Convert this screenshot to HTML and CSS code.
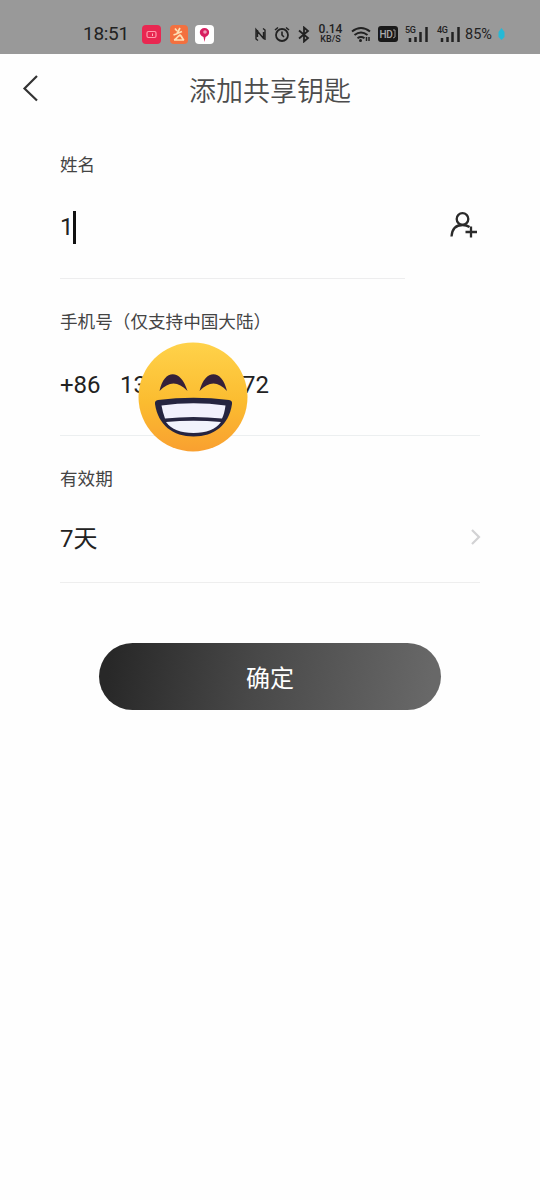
FILE: index.html
```html
<!DOCTYPE html>
<html lang="zh-CN">
<head>
<meta charset="utf-8">
<title>添加共享钥匙</title>
<link rel="stylesheet" href="styles.css">
</head>
<body>
<header class="status">
  <span class="time">18:51</span>
  <div class="apps">
    <svg width="19" height="19" viewBox="0 0 19 19"><rect width="19" height="19" rx="4" fill="#e92751"/><rect x="5" y="6.500" width="9" height="6" rx="1.500" fill="none" stroke="#ff9aac" stroke-width="1.200"/><path d="M10.500 8.500v2.500" stroke="#ffb4c0"/></svg>
    <svg class="taobao" width="18" height="19" viewBox="0 0 18 19"><rect width="18" height="19" rx="4" fill="#f3703f"/><path d="M5 3.500l2 2.500M10 3L7 8.500l5-2M3.500 10l4-1.500M4 15c3-1 3.500-4 6-5 2 1 2 4 4 5H4" fill="none" stroke="#ffe0b5" stroke-width="1.700"/></svg>
    <svg width="19" height="19" viewBox="0 0 19 19"><rect width="19" height="19" rx="4" fill="#fff"/><path d="M9.500 17l-1-5C3 10 4 3 9.500 3s6.500 7 1 9z" fill="#d81f60"/><circle cx="10" cy="7" r="1.800" fill="#ef9ab5"/></svg>
  </div>
  <div class="signals">
    <svg width="13" height="17" viewBox="0 0 13 17"><path d="M4 14.500L2 13V3.500L10 13M3.500 4v7M9 2.500L11 4v10M9.500 6v6" fill="none" stroke="#222" stroke-width="1.400"/></svg>
    <svg class="alarm" width="16" height="17" viewBox="0 0 16 17"><circle cx="8" cy="9" r="6" fill="none" stroke="#222" stroke-width="1.800"/><path d="M8 5.500V9l2 2M1 4l3-2.500M15 4l-3-2.500" fill="none" stroke="#222" stroke-width="1.600"/></svg>
    <svg class="bt" width="12" height="17" viewBox="0 0 12 17"><path d="M1 4.500l9 7.500-4 3.500V1.500l4 3.500-9 7.500" fill="none" stroke="#222" stroke-width="1.800"/></svg>
    <div class="speed"><span class="rate">0.14</span><span class="unit">KB/S</span></div>
    <svg class="wifi" width="20" height="17" viewBox="0 0 20 17"><path d="M1 5.500q9-7 18 0M3.500 9q6.500-5 13 0M6.500 12.200q3.500-2.500 7 0" fill="none" stroke="#222" stroke-width="2"/><circle cx="9.500" cy="14.500" r="1.500" fill="#222"/><path d="M15.500 11v4M18 11v4" stroke="#222" stroke-width="1.500"/></svg>
    <span class="hd">HD<svg width="4" height="10" viewBox="0 0 4 10"><path d="M1 1h2v7L1 9" fill="none" stroke="#999"/></svg></span>
    <div class="cell"><span class="gen">5G</span><svg width="23" height="17" viewBox="0 0 23 17"><path d="M4 16v-4M9.500 16v-5M14.500 16V6M20.500 16V1" stroke="#222" stroke-width="2.500"/></svg></div>
    <div class="cell cell-b"><span class="gen">4G</span><svg width="23" height="17" viewBox="0 0 23 17"><path d="M4 16v-4M9.500 16v-5M14.500 16V6M20.500 16V1" stroke="#222" stroke-width="2.500"/></svg></div>
    <span class="pct">85%</span>
    <svg class="drop" width="9" height="14" viewBox="0 0 9 14"><path d="M4.500 1l3 4v5l-3 3-3-3V5z" fill="#26b9d6"/></svg>
  </div>
</header>
<nav class="nav">
  <svg class="back" width="18" height="28" viewBox="0 0 18 28"><path d="M15 2L2.500 14.500 15 26.500" fill="none" stroke="#333" stroke-width="2.200"/></svg>
  <h1 class="title">添加共享钥匙</h1>
</nav>
<main class="form">
  <section class="name">
    <div class="name-field">
      <div class="label">姓名</div>
      <div class="value">1<i class="caret"></i></div>
    </div>
    <svg class="contact" width="30" height="30" viewBox="0 0 30 30"><circle cx="14.500" cy="8" r="5.800" fill="none" stroke="#2b2b2b" stroke-width="2.300"/><path d="M3.500 25.500C4 18 8 14 14.500 14q4 0 7 2M23 15.500v11M17.500 21H29" fill="none" stroke="#2b2b2b" stroke-width="2.300"/></svg>
  </section>
  <section class="phone">
    <div class="label">手机号（仅支持中国大陆）</div>
    <div class="value"><span class="code">+86</span><span class="head">13</span><span>72</span></div>
    <svg class="emoji" width="110" height="110" viewBox="0 0 110 110">
      <defs><linearGradient id="face" x1="0" y1="0" x2="0" y2="1"><stop offset="0" stop-color="#ffd24a"/><stop offset=".55" stop-color="#fbbc30"/><stop offset="1" stop-color="#f9a030"/></linearGradient></defs>
      <circle cx="55" cy="55" r="54.500" fill="url(#face)"/>
      <path d="M21.500 49C26 26.500 43 26.500 49.500 49 40 39 31 39 21.500 49zM61.500 49C67 26.500 84 26.500 89 49 80 39 71 39 61.500 49z" fill="#352039"/>
      <path d="M17 62q-.5-3.500 3-4 35.500-4.500 71 0 3.500.5 3 4C91 83 76 94.500 55.500 94.500S20 83 17 62z" fill="#252440"/>
      <path d="M23.500 63.500q32-4.500 64 0-1 8-3.500 13-28.500-3-57 0-2.500-7-3.500-13z" fill="#f1f0fc"/>
      <path d="M28 80q27.500-2.500 55 0Q75 91 55.500 91T28 80z" fill="#f1f3fc"/>
    </svg>
  </section>
  <section class="period">
    <div class="label">有效期</div>
    <div class="value">7天</div>
    <svg class="more" width="11" height="18" viewBox="0 0 11 18"><path d="M2 2l7 7-7 7" fill="none" stroke="#d2d2d4" stroke-width="2.200"/></svg>
  </section>
</main>
<button class="submit">确定</button>
</body>
</html>
```
FILE: styles.css
```css
* { box-sizing: border-box; }
body {
  margin: 0;
  width: 540px;
  height: 1200px;
  overflow: hidden;
  background: #fefefe;
  font-family: Roboto, "Noto Sans CJK SC", sans-serif;
  color: #222;
}
svg { display: block; flex: none; }
.status {
  display: flex;
  align-items: center;
  height: 54px;
  padding: 14px 0 0 83px;
  background: #999;
}
.time { width: 59px; font-size: 19px; line-height: 22px; letter-spacing: -.3px; }
.apps { display: flex; width: 112px; }
.apps .taobao { margin: 0 7px 0 9px; }
.signals { display: flex; align-items: center; }
.alarm { margin-left: 7px; }
.bt { margin-left: 8px; }
.speed { width: 25px; margin-left: 8px; display: flex; flex-direction: column; align-items: center; }
.rate { font-size: 12px; line-height: 11px; font-weight: 500; }
.unit { font-size: 9px; line-height: 9px; font-weight: 500; }
.wifi { margin-left: 8px; }
.hd {
  display: flex;
  align-items: center;
  justify-content: center;
  width: 20px;
  height: 16px;
  margin-left: 7px;
  border-radius: 3px;
  background: #191919;
  color: #aaa;
  font-size: 10px;
  font-weight: 500;
  letter-spacing: -.4px;
}
.cell { position: relative; margin-left: 8px; }
.cell-b { margin-left: 9px; }
.gen { position: absolute; left: -1px; top: 0; font-size: 9px; line-height: 9px; font-weight: 500; letter-spacing: -.3px; }
.pct { width: 30px; margin-left: 4px; padding-top: 1px; font-size: 14.5px; line-height: 18px; }
.drop { margin-left: 2px; }
.nav { display: flex; align-items: center; height: 71px; padding-left: 22px; }
.back { margin-bottom: 4px; }
.title {
  margin: 5px 0 0 149px;
  font-size: 27px;
  line-height: 40px;
  font-weight: 350;
  color: #4c4c4c;
}
.form { padding: 25px 60px 0; }
.label { padding-top: 1px; font-size: 17.6px; line-height: 28px; color: #444; }
.value { display: flex; align-items: center; height: 36px; font-size: 24px; line-height: 36px; }
.name { display: flex; height: 129px; }
.name-field { width: 345px; border-bottom: 1px solid #ededee; }
.name .value { margin-top: 30px; }
.caret { width: 3px; height: 33px; margin-left: -1px; background: #111; }
.contact { margin: 61px 0 0 43px; }
.phone { position: relative; height: 157px; padding-top: 28px; border-bottom: 1px solid #eceff0; }
.phone .value { margin-top: 31px; }
.code { width: 60px; }
.head { width: 122px; }
.emoji { position: absolute; left: 78px; top: 63px; }
.period { position: relative; height: 147px; padding-top: 28px; border-bottom: 1px solid #eee; }
.period .value { margin-top: 28px; }
.more { position: absolute; right: -1px; top: 92px; }
.submit {
  display: block;
  width: 342px;
  height: 67px;
  margin: 60px 0 0 99px;
  padding: 4px 0 0;
  border: 0;
  border-radius: 34px;
  background: linear-gradient(100deg, #282828 4%, #484848 45%, #686868 96%);
  color: #fff;
  font: 24px/36px Roboto, "Noto Sans CJK SC", sans-serif;
}
```
